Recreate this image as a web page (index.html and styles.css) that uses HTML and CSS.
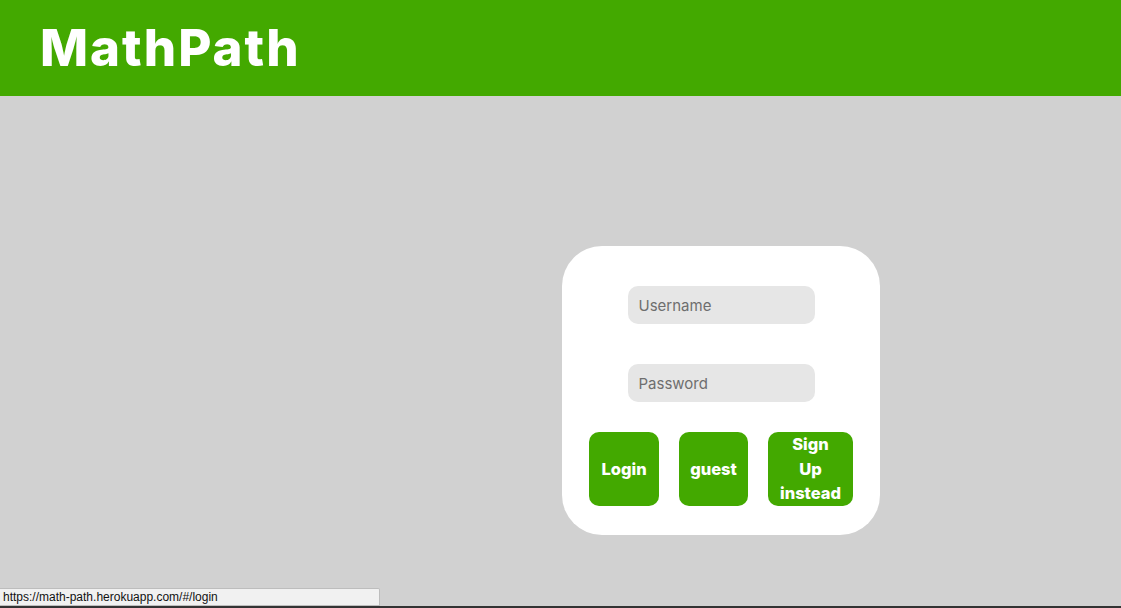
FILE: index.html
```html
<!DOCTYPE html>
<html>
<head>
<meta charset="utf-8">
<link rel="stylesheet" href="styles.css">
</head>
<body>
<header class="topbar">
  <h1 class="brand">MathPath</h1>
</header>
<main class="main">
  <div class="spacer"></div>
  <form class="card">
    <input class="field" type="text" placeholder="Username">
    <input class="field" type="password" placeholder="Password">
    <div class="actions">
      <button class="btn btn-login" type="button">Login</button>
      <button class="btn btn-guest" type="button">guest</button>
      <button class="btn btn-signup" type="button">Sign Up instead</button>
    </div>
  </form>
</main>
<div class="status">https://math-path.herokuapp.com/#/login</div>
<div class="edge"></div>
</body>
</html>
```
FILE: styles.css
```css
html, body {
  margin: 0;
  padding: 0;
  height: 100%;
}
body {
  background: #d1d1d1;
  font-family: "Inter", "Noto Sans", sans-serif;
  overflow: hidden;
}
.topbar {
  background: #43a900;
  height: 96px;
  display: flex;
  align-items: center;
  padding-left: 40px;
  box-sizing: border-box;
}
.brand {
  margin: 0;
  color: #fff;
  font-family: "Inter", sans-serif;
  font-weight: 800;
  font-size: 51px;
  letter-spacing: 2px;
  line-height: 1;
  padding-bottom: 2px;
}
.main {
  display: flex;
  padding-top: 150px;
}
.spacer {
  width: 562px;
  flex: none;
}
.card {
  width: 318px;
  height: 289px;
  background: #fff;
  border-radius: 40px;
  box-sizing: border-box;
  padding-top: 40px;
  display: flex;
  flex-direction: column;
  align-items: center;
}
.field {
  width: 187px;
  height: 38px;
  box-sizing: border-box;
  border: none;
  border-radius: 10px;
  background: #e6e6e6;
  padding: 0 11px;
  font-family: "Inter", sans-serif;
  font-size: 15px;
  color: #333;
  outline: none;
  margin-bottom: 40px;
}
.field + .field {
  margin-bottom: 30px;
}
.field::placeholder {
  color: #6e6e6e;
}
.actions {
  display: flex;
  width: 100%;
  padding-left: 27px;
  box-sizing: border-box;
}
.btn {
  border: none;
  background: #43a900;
  color: #fff;
  border-radius: 10px;
  height: 74px;
  font-family: "Inter", sans-serif;
  font-weight: 800;
  font-size: 16.5px;
  line-height: 24.5px;
  padding: 0;
  text-align: center;
}
.btn-login { width: 70px; }
.btn-guest { width: 69px; margin-left: 20px; }
.btn-signup { width: 85px; margin-left: 20px; padding: 0 12px; }
.status {
  position: fixed;
  left: 0;
  bottom: 2px;
  width: 376px;
  height: 16px;
  background: #f1f1f1;
  border: 1px solid #bdbdbd;
  border-left: none;
  border-radius: 0 2px 0 0;
  font-family: "Liberation Sans", sans-serif;
  font-size: 12px;
  line-height: 16px;
  padding-left: 3px;
  color: #111;
  box-sizing: content-box;
}
.edge {
  position: fixed;
  left: 0;
  right: 0;
  bottom: 0;
  height: 2px;
  background: #333;
}
```
